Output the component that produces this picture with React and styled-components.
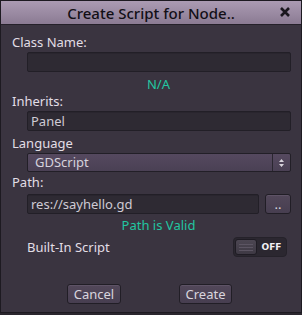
import React, { useState } from "react";
import styled, { createGlobalStyle } from "styled-components";

const Global = createGlobalStyle`
    body {
        margin: 0;
        background: #2a262e;
        font-family: "Noto Sans", "Open Sans", sans-serif;
    }
`

const Window = styled.div`
    width: 300px;
    height: 311px;
    border: 1px solid #1d1a21;
    background: #3a3440;
    display: flex;
    flex-direction: column;
`

const TitleBar = styled.div`
    height: 23px;
    border-bottom: 1px solid #25212a;
    background: linear-gradient(#ab9bb3, #8b7b93);
    display: flex;
    align-items: center;
    justify-content: center;
    position: relative;
    color: #120f16;
    font-size: 15px;
    font-weight: 500;
`

const Close = styled.span`
    position: absolute;
    right: 10px;
    top: 4px;
    display: flex;
`

const Body = styled.div`
    display: flex;
    flex-direction: column;
    padding: 9px 10px 0 11px;
`

const Label = styled.div`
    font-size: 13px;
    line-height: 16px;
    color: #e2dee6;
    margin-top: ${p => p.top || 0}px;
    padding-left: ${p => p.indent || 0}px;
`

const Status = styled.div`
    font-size: 13px;
    line-height: 16px;
    color: #22c6a0;
    text-align: center;
    padding-left: 14px;
    margin-top: ${p => p.top || 0}px;
`

const Row = styled.div`
    display: flex;
    align-items: center;
    gap: 6px;
    margin-top: ${p => p.top || 0}px;
    padding-left: ${p => p.indent || 0}px;
    justify-content: ${p => p.justify || "flex-start"};
`

const Input = styled.div`
    flex: 1;
    height: 18px;
    margin-left: ${p => p.indent || 0}px;
    background: #2e2a33;
    border: 1px solid #221f27;
    border-radius: 2px;
    box-shadow: inset 0 1px 0 #29252e;
    color: #cfcbd4;
    font-size: 13px;
    line-height: 18px;
    padding-left: 3px;
`

const Select = styled.div`
    height: 17px;
    margin-left: 15px;
    display: flex;
    border: 1px solid #221f27;
    border-radius: 2px;
    background: linear-gradient(#55495f, #4a4054);
`

const SelectText = styled.div`
    flex: 1;
    color: #d6d2dc;
    font-size: 13px;
    line-height: 17px;
    padding-left: 7px;
`

const SelectArrow = styled.div`
    width: 17px;
    border-left: 1px solid #2a2630;
    display: flex;
    align-items: center;
    justify-content: center;
`

const Button = styled.div`
    width: ${p => p.w}px;
    height: 18px;
    border: 1px solid #211e26;
    border-radius: 3px;
    background: linear-gradient(#524759, #473e50);
    color: #d9d5de;
    font-size: 13px;
    line-height: 18px;
    text-align: center;
    box-shadow: inset 0 1px 0 #5e5366;
`

const Toggle = styled.div`
    width: 51px;
    height: 18px;
    border: 1px solid #25222a;
    border-radius: 4px;
    background: #2b2730;
    display: flex;
    align-items: center;
    padding-left: 1px;
`

const Knob = styled.div`
    width: 22px;
    height: 16px;
    border: 1px solid #1f1c24;
    border-radius: 3px;
    background: linear-gradient(#4c4652, #3e3944);
    display: flex;
    flex-direction: column;
    justify-content: center;
    gap: 2px;
    padding: 0 3px;
    box-sizing: border-box;
`

const KnobLine = styled.div`
    height: 1px;
    background: #5c5563;
`

const ToggleText = styled.div`
    flex: 1;
    color: #f2f0f4;
    font-size: 9px;
    font-weight: bold;
    text-align: center;
    font-family: "DejaVu Sans", sans-serif;
`

const App = () => {
    const [builtIn, setBuiltIn] = useState(false);
    return (
        <Window>
            <Global />
            <TitleBar>
                Create Script for Node..
                <Close>
                    <svg width="12" height="14" viewBox="0 0 12 14">
                        <path d="M2 3 L10 11 M10 3 L2 11" stroke="#1a171e" strokeWidth="2.6" />
                    </svg>
                </Close>
            </TitleBar>
            <Body>
                <Label>Class Name:</Label>
                <Row top={2}>
                    <Input indent={15}></Input>
                </Row>
                <Status top={4}>N/A</Status>
                <Label top={1}>Inherits:</Label>
                <Row top={2}>
                    <Input indent={15}>Panel</Input>
                </Row>
                <Label top={4}>Language</Label>
                <Select style={{ marginTop: 2 }}>
                    <SelectText>GDScript</SelectText>
                    <SelectArrow>
                        <svg width="7" height="10" viewBox="0 0 7 10">
                            <path d="M3.5 1 L6 4 L1 4 Z M3.5 9 L6 6 L1 6 Z" fill="#d8d4dc" />
                        </svg>
                    </SelectArrow>
                </Select>
                <Label top={2}>Path:</Label>
                <Row top={4}>
                    <Input indent={15}>res://sayhello.gd</Input>
                    <Button w={24}>..</Button>
                </Row>
                <Status top={3}>Path is Valid</Status>
                <Row top={4} indent={15} justify="space-between">
                    <Label>Built-In Script</Label>
                    <Toggle onClick={() => setBuiltIn(!builtIn)} style={{ marginRight: 4 }}>
                        <Knob>
                            <KnobLine />
                            <KnobLine />
                            <KnobLine />
                        </Knob>
                        <ToggleText>{builtIn ? "ON" : "OFF"}</ToggleText>
                    </Toggle>
                </Row>
                <Row top={27} indent={55} style={{ gap: 58 }}>
                    <Button w={52}>Cancel</Button>
                    <Button w={51}>Create</Button>
                </Row>
            </Body>
        </Window>
    )
}

export default App;
